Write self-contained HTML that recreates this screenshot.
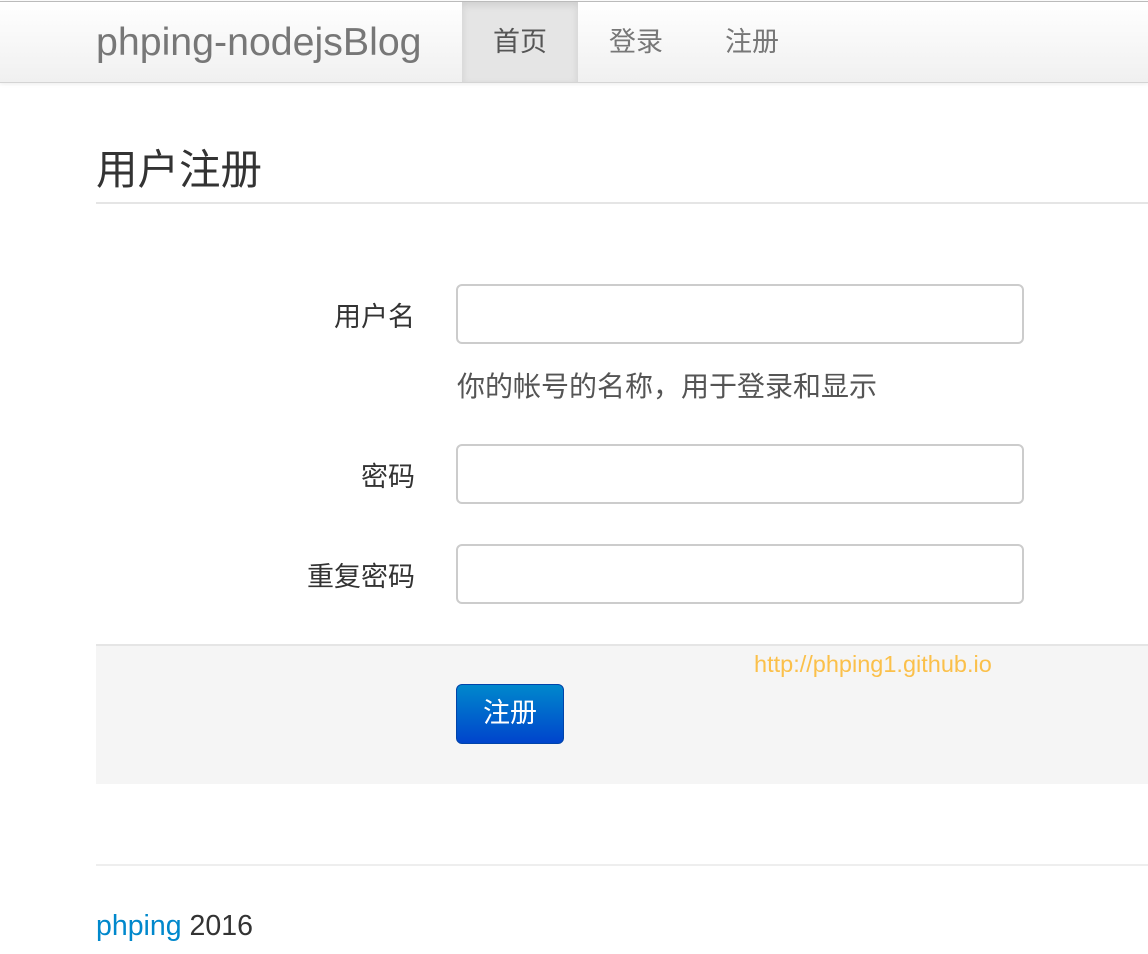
<!DOCTYPE html>
<html><head><meta charset="utf-8"><style>
*{margin:0;padding:0;box-sizing:border-box}
body{width:1148px;height:954px;background:#fff;font-family:"Liberation Sans","Noto Sans CJK SC",sans-serif;color:#333;position:relative;overflow:hidden}
.nav{position:absolute;left:0;top:1px;width:1148px;height:82px;background:linear-gradient(#fff,#f0f0f0);border-top:1px solid #bbb;border-bottom:1px solid #d4d4d4;box-shadow:0 1px 4px rgba(0,0,0,.08)}
.brand{position:absolute;left:96px;top:18px;font-size:39.3px;color:#777;letter-spacing:0px}
.item{position:absolute;top:0;height:80px;line-height:80px;font-size:27px;color:#777;text-align:center}
.active{background:#e5e5e5;box-shadow:inset 0 3px 8px rgba(0,0,0,.1);color:#555}
.abs{position:absolute}
h1{position:absolute;left:96px;top:136px;font-size:41.5px;font-weight:normal;color:#333}
.lbl{position:absolute;font-size:27px;color:#333;text-align:right;width:200px;left:215px}
.inp{position:absolute;left:456px;width:568px;height:60px;border:2px solid #ccc;border-radius:6px;background:#fff}
</style></head><body>
<div class="nav">
<div class="brand">phping-nodejsBlog</div>
<div class="item active" style="left:462px;width:116px">首页</div>
<div class="item" style="left:590px;width:92px">登录</div>
<div class="item" style="left:706px;width:92px">注册</div>
</div>
<h1>用户注册</h1>
<div class="abs" style="left:96px;top:202px;width:1052px;height:2px;background:#e5e5e5"></div>
<div class="lbl" style="top:295px">用户名</div>
<div class="inp" style="top:284px"></div>
<div class="abs" style="left:457px;top:365px;font-size:28px;color:#555">你的帐号的名称，用于登录和显示</div>
<div class="lbl" style="top:455px">密码</div>
<div class="inp" style="top:444px"></div>
<div class="lbl" style="top:555px">重复密码</div>
<div class="inp" style="top:544px"></div>
<div class="abs" style="left:96px;top:644px;width:1052px;height:140px;background:#f5f5f5;border-top:2px solid #e5e5e5"></div>
<div class="abs" style="left:754px;top:651px;font-size:23.5px;color:#fbc04a">http://phping1.github.io</div>
<div class="abs" style="left:456px;top:684px;width:108px;height:60px;border-radius:6px;background:linear-gradient(#0088cc,#0044cc);border:1px solid #0044aa;color:#fff;font-size:27px;text-align:center;line-height:56px">注册</div>
<div class="abs" style="left:96px;top:864px;width:1052px;height:2px;background:#eee"></div>
<div class="abs" style="left:96px;top:910px;font-size:28.5px;color:#333"><span style="color:#0088cc">phping</span> 2016</div>
</body></html>
